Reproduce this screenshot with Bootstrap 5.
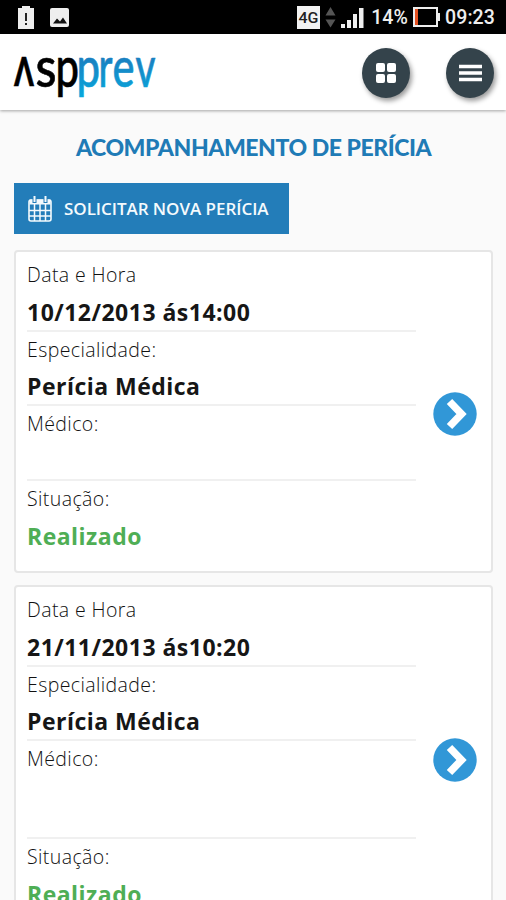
<!DOCTYPE html>
<html lang="pt-BR">
<head>
<meta charset="utf-8">
<meta name="viewport" content="width=device-width, initial-scale=1">
<title>Aspprev</title>
<link href="https://cdn.jsdelivr.net/npm/bootstrap@5.3.0/dist/css/bootstrap.min.css" rel="stylesheet">
<style>
body{background:#fafafa;font-family:"Open Sans",sans-serif;height:900px;overflow:hidden;color:#161616}
.status{height:34px;background:#000;color:#eee;font:500 19.5px/34px Roboto,sans-serif;padding:0 11px 0 17px}
.status svg,.topbar svg{display:block}
.clock,.charge{letter-spacing:.1px;padding-top:2px}
.charge{padding-left:2px}
.topbar{height:76px;background:#fff;box-shadow:0 1px 3px rgba(0,0,0,.35);padding:0 12px 0 12px;position:relative}
.round{width:48px;height:50px;border-radius:50%;background:#34434b;border:0;padding:0;box-shadow:2px 3px 5px rgba(0,0,0,.4)}
.actions{gap:36px;margin-top:1px}
.page-title{font:900 23px/30px Lato,sans-serif;color:#1f7bb6;margin:22px 0 21px;letter-spacing:-.45px;padding-left:1px;white-space:nowrap}
.content{padding:0 14px}
.new-btn{width:275px;height:51px;background:#237db9;color:#f4fafd;border-radius:0;font-size:17px;font-weight:600;padding:0 0 0 14px;white-space:nowrap;margin-bottom:16px}
.new-btn svg{margin-right:12px}
.new-btn span{letter-spacing:-.04px}
.exam{border:2px solid #e6e6e6;border-radius:4px;height:323px;padding:5px 14px 0 11px;margin-bottom:12px;width:479px}
.exam.tall{height:421px}
.fields{width:389px}
.field{height:74.7px;border-bottom:2px solid #f0f0f0}
.field.last{border:0}
.tall .field.blank{height:98px}
.label-text{font-size:19.5px;font-weight:300;line-height:35.5px;letter-spacing:.4px;color:#111}
.value-text{font-size:23px;font-weight:700;line-height:39px;letter-spacing:.48px;white-space:nowrap}
.done{color:#4fae55}
.go{width:44px;height:44px}
.tall .go{margin-top:146px}
</style>
</head>
<body>
<div class="status d-flex align-items-center justify-content-between">
  <div class="d-flex align-items-center">
    <svg width="54" height="24" viewBox="0 0 54 24">
      <path fill="#eee" d="M1 3h4V1h8v2h4v21H1z"/><path stroke="#222" stroke-width="2" d="M9 8v8M9 18v2"/>
      <rect x="33" y="3" width="19" height="19" rx="2" fill="#eee"/><path fill="#111" d="M36 18.500l4-5 3 3 3-4 4 6z"/>
    </svg>
  </div>
  <div class="d-flex align-items-center">
    <svg width="69" height="24" viewBox="0 0 69 24">
      <rect x="1" y="1" width="23" height="23" fill="#f2f2f2"/>
      <text x="2.500" y="18" font-size="15" font-weight="500" textLength="20" lengthAdjust="spacingAndGlyphs" fill="#222">4G</text>
      <path fill="#555" d="M29.500 10.500l5-8.500 5 8.500zM29.500 14.500h10l-5 8z"/>
      <path fill="#eee" d="M45 19h4v4h-4zM51 15h4v8h-4zM57 9h4v14h-4zM63 3h4.500v20h-4.500z"/>
    </svg>
    <span class="charge ms-1">14%</span>
    <svg width="33" height="22" viewBox="0 0 33 22"><rect x="6" y="2" width="23" height="18" fill="none" stroke="#eee" stroke-width="2"/><path fill="#e65222" d="M7 3h3v16H7z"/><path fill="#eee" d="M30 7h2v8h-2z"/></svg>
    <span class="clock ms-1">09:23</span>
  </div>
</div>
<header class="topbar d-flex align-items-center justify-content-between">
  <svg width="150" height="76" viewBox="12 34 150 76" role="img" aria-label="Aspprev" font-family="Lato,sans-serif" font-size="55" font-weight="500" stroke="#000" stroke-width=".6">
    <defs><linearGradient id="brand" gradientUnits="userSpaceOnUse" x1="0" y1="57" x2="0" y2="97"><stop offset="0" stop-color="#1a7fc0"/><stop offset="1" stop-color="#08a8dc"/></linearGradient></defs>
    <text x="13.500" y="86" font-family="Roboto,sans-serif" font-size="40" textLength="21" lengthAdjust="spacingAndGlyphs">Λ</text>
    <text x="35.500" y="86.500" textLength="21" lengthAdjust="spacingAndGlyphs">s</text>
    <text x="55.500" y="86.500" textLength="23.500" lengthAdjust="spacingAndGlyphs">p</text>
    <g fill="url(#brand)" stroke="url(#brand)">
      <text x="76.500" y="86.500" textLength="23.500" lengthAdjust="spacingAndGlyphs">p</text>
      <text x="98.500" y="86.500" textLength="14" lengthAdjust="spacingAndGlyphs">r</text>
      <text x="112.500" y="86.500" textLength="22" lengthAdjust="spacingAndGlyphs">e</text>
      <text x="135.500" y="86.500" textLength="20" lengthAdjust="spacingAndGlyphs">v</text>
    </g>
  </svg>
  <div class="actions d-flex">
    <button class="round btn d-flex align-items-center justify-content-center" aria-label="Painel"><svg width="22" height="22" viewBox="0 0 22 22" fill="#fff"><rect x="1" y="1" width="9" height="9" rx="2"/><rect x="12" y="1" width="9" height="9" rx="2"/><rect x="1" y="12" width="9" height="9" rx="2"/><rect x="12" y="12" width="9" height="9" rx="2"/></svg></button>
    <button class="round btn d-flex align-items-center justify-content-center" aria-label="Menu"><svg width="23" height="18" viewBox="0 0 23 18"><path stroke="#fff" stroke-width="3.500" d="M0 2.500h23M0 9h23M0 15.500h23"/></svg></button>
  </div>
</header>
<main class="content">
  <h1 class="page-title text-center">ACOMPANHAMENTO DE PERÍCIA</h1>
  <button class="new-btn btn border-0 d-flex align-items-center">
    <svg width="24" height="26" viewBox="0 0 24 26" fill="none" stroke="#f4fafd"><rect x="1" y="4" width="22" height="21" rx="2" stroke-width="1.600"/><path stroke-width="5" d="M1.500 6h21"/><path stroke-width="1.500" d="M1 14.500h22M1 20h22M6.500 8v17M12 8v17M17.500 8v17"/><path stroke="#237db9" stroke-width="4" d="M6.500 1v6M17.500 1v6"/><path stroke-width="2" d="M6.500 0v6M17.500 0v6"/></svg>
    <span>SOLICITAR NOVA PERÍCIA</span>
  </button>
  <section class="exam card flex-row align-items-center justify-content-between">
    <div class="fields align-self-start">
      <div class="field"><div class="label-text">Data e Hora</div><div class="value-text">10/12/2013 ás14:00</div></div>
      <div class="field"><div class="label-text">Especialidade:</div><div class="value-text">Perícia Médica</div></div>
      <div class="field blank"><div class="label-text">Médico:</div></div>
      <div class="field last"><div class="label-text">Situação:</div><div class="value-text done">Realizado</div></div>
    </div>
    <svg class="go" viewBox="0 0 44 44"><circle cx="22" cy="22" r="21.700" fill="#3197d7"/><path d="M16.500 9.500L28.500 22 16.500 34.500" fill="none" stroke="#fff" stroke-width="7.500"/></svg>
  </section>
  <section class="exam tall card flex-row justify-content-between">
    <div class="fields">
      <div class="field"><div class="label-text">Data e Hora</div><div class="value-text">21/11/2013 ás10:20</div></div>
      <div class="field"><div class="label-text">Especialidade:</div><div class="value-text">Perícia Médica</div></div>
      <div class="field blank"><div class="label-text">Médico:</div></div>
      <div class="field last"><div class="label-text">Situação:</div><div class="value-text done">Realizado</div></div>
    </div>
    <svg class="go align-self-start" viewBox="0 0 44 44"><circle cx="22" cy="22" r="21.700" fill="#3197d7"/><path d="M16.500 9.500L28.500 22 16.500 34.500" fill="none" stroke="#fff" stroke-width="7.500"/></svg>
  </section>
</main>
<script src="https://cdn.jsdelivr.net/npm/bootstrap@5.3.0/dist/js/bootstrap.bundle.min.js"></script>
</body>
</html>
